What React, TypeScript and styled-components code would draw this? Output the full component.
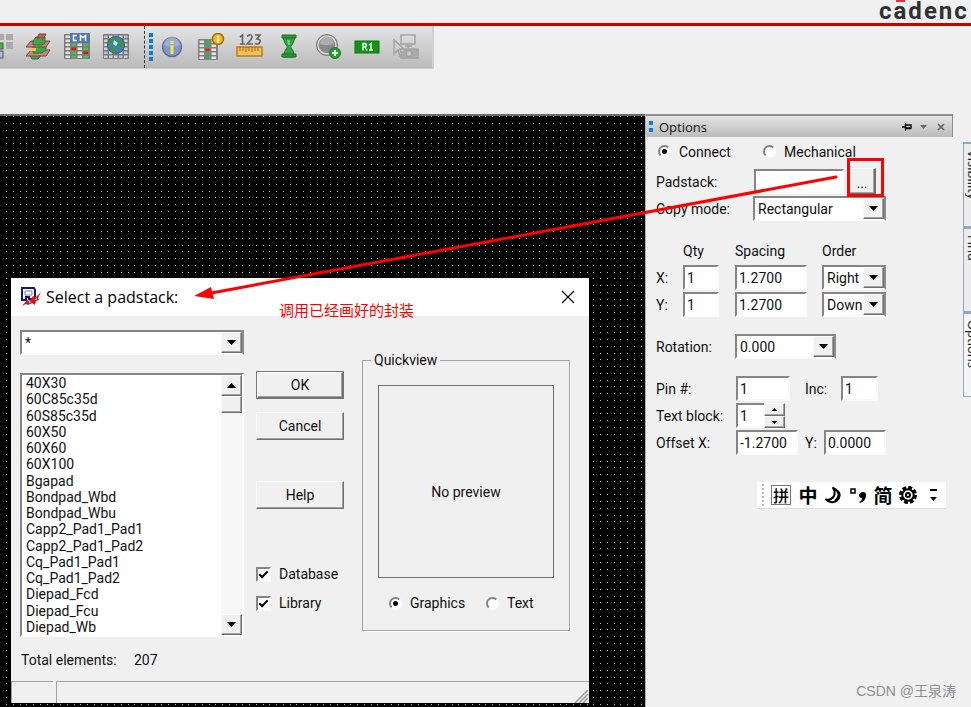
import React from "react";
import styled, { createGlobalStyle, css } from "styled-components";

const GlobalStyle = createGlobalStyle`
  *, *::before, *::after { box-sizing: border-box; }
  body { margin: 0; background: #f0f0f0; }
  button, input, select { font: inherit; color: inherit; }
`;

const humanist = `"Open Sans", "Noto Sans", sans-serif`;
const classic = `Roboto, "Liberation Sans", "Noto Sans CJK SC", sans-serif`;
const cjk = `"Noto Sans CJK SC", "Liberation Sans", sans-serif`;

const raised = css`
  border: 1px solid;
  border-color: #fbfbfb #6e6e6e #6e6e6e #fbfbfb;
  box-shadow: inset -1px -1px 0 #a3a3a3;
  background: #f0f0f0;
`;
const sunken = css`
  border: 2px solid;
  border-color: #858585 #fafafa #fafafa #858585;
  background: #fff;
`;

/* ---------- application frame ---------- */

const Frame = styled.div`
  position: relative;
  display: flex;
  flex-direction: column;
  min-height: 100vh;
  overflow: hidden;
  background: #f0f0f0;
  color: #111;
  font: 14px/16px ${classic};
`;
const Brand = styled.header`
  display: flex;
  justify-content: flex-end;
  height: 26px;
  border-bottom: 3px solid #cc0000;
`;
const Logo = styled.div`
  display: flex;
  gap: 2px;
  width: 92px;
  font: bold 24px/22px Roboto, "Liberation Sans", sans-serif;
  color: #303030;
`;
const Accent = styled.span`
  position: relative;
  &::before {
    content: "";
    position: absolute;
    top: 0;
    left: 2px;
    width: 9px;
    height: 2px;
    background: #e2353b;
  }
`;
const ToolStrip = styled.nav`
  display: flex;
  align-items: center;
  align-self: flex-start;
  height: 43px;
  padding-right: 12px;
  background: linear-gradient(#e4e4e4, #bababa);
  border-right: 2px solid #cfcfcf;
  border-bottom: 1px solid #cfcfcf;
`;
const ToolGroup = styled.div`
  display: flex;
  gap: 11px;
`;
const Tool = styled.button`
  width: 28px;
  height: 28px;
  padding: 0;
  border: 0;
  background: none;
  svg { display: block; }
`;
const PartialTool = styled(Tool)`
  width: 13px;
  overflow: hidden;
`;
const StripDivider = styled.div`
  display: flex;
  align-items: center;
  gap: 4px;
  height: 100%;
  margin: 0 5px 0 14px;
  &::before {
    content: "";
    align-self: stretch;
    border-left: 1px dashed #333;
  }
`;
const Work = styled.main`
  display: flex;
  flex: 1;
  margin-top: 45px;
`;
const rowStops = (c: string) =>
  `#000 0 1px, ${c} 1px 2px, #000 2px 8px, ${c} 8px 9px, #000 9px 15px, ${c} 15px 16px, #000 16px 21px, ${c} 21px 22px, #000 22px 27px`;
const Canvas = styled.section`
  position: relative;
  flex: 1;
  min-height: 593px;
  border-top: 2px solid #6c6c6c;
  background:
    linear-gradient(90deg, ${rowStops("transparent")}) 5px 0 / 27px 27px,
    linear-gradient(${rowStops("#c4c4c4")}) 0 6px / 27px 27px;
`;

/* ---------- form controls ---------- */

const Field = styled.input<{ $w: number; $after?: number }>`
  ${sunken}
  width: ${(p) => p.$w}px;
  height: 25px;
  margin: 0 ${(p) => p.$after ?? 0}px 0 0;
  padding: 0 2px;
  border-radius: 0;
  outline: 0;
`;
const ComboBox = styled.div<{ $w?: number }>`
  display: grid;
  align-items: center;
  width: ${(p) => (p.$w ? `${p.$w}px` : "100%")};
  > * { grid-area: 1 / 1; }
`;
const ComboSelect = styled.select`
  ${sunken}
  appearance: none;
  width: 100%;
  height: 25px;
  padding: 0 22px 0 3px;
  border-right-color: #8c8c8c;
  border-radius: 0;
`;
const Arrow = styled.span`
  ${raised}
  display: grid;
  place-items: center;
  justify-self: end;
  width: 21px;
  height: 21px;
  margin-right: 2px;
  pointer-events: none;
`;
const Triangle = ({ up, small }: { up?: boolean; small?: boolean }) => (
  <svg width={small ? 5 : 9} height={small ? 3 : 5} viewBox="0 0 9 5" preserveAspectRatio="none" aria-hidden>
    <path d={up ? "M0 5h9L4.500 0z" : "M0 0h9L4.500 5z"} fill="#000" />
  </svg>
);
const Combo = ({ label, options, width }: { label: string; options: string[]; width?: number }) => (
  <ComboBox $w={width}>
    <ComboSelect aria-label={label}>
      {options.map((o) => (
        <option key={o}>{o}</option>
      ))}
    </ComboSelect>
    <Arrow>
      <Triangle />
    </Arrow>
  </ComboBox>
);
const Choice = styled.label<{ $w?: number }>`
  display: flex;
  align-items: center;
  gap: 8px;
  width: ${(p) => (p.$w ? `${p.$w}px` : "auto")};
`;
const Radio = styled.input.attrs({ type: "radio" })`
  appearance: none;
  flex: none;
  width: 13px;
  height: 13px;
  margin: 0;
  border: 2px solid;
  border-color: #808080 #fff #fff #808080;
  border-radius: 50%;
  background: #fff;
  &:checked { background: radial-gradient(circle, #000 0 2px, #fff 3px); }
`;
const Check = styled.input.attrs({ type: "checkbox" })`
  ${sunken}
  appearance: none;
  display: grid;
  place-items: center;
  width: 15px;
  height: 15px;
  margin: 0;
  &:checked::before {
    content: "";
    width: 9px;
    height: 5px;
    margin-top: -2px;
    border: solid #000;
    border-width: 0 0 2px 2px;
    transform: rotate(-45deg);
  }
`;
const Push = styled.button<{ $default?: boolean }>`
  ${raised}
  width: 100%;
  height: 28px;
  padding: 0;
  ${(p) => p.$default && "outline: 1px solid #777; outline-offset: -1px; border-width: 2px;"}
`;

/* ---------- options panel ---------- */

const Side = styled.aside`
  position: relative;
  display: flex;
  gap: 10px;
  flex: 0 0 326px;
  border-left: 1px solid #b5b5b5;
`;
const Panel = styled.section`
  flex: 1;
`;
const PanelBar = styled.header`
  display: flex;
  align-items: center;
  gap: 6px;
  height: 23px;
  padding: 0 6px 0 3px;
  border-top: 2px solid #8d8d8d;
  border-right: 1px solid #8d8d8d;
  background: linear-gradient(#e2e2e2, #bcbcbc);
`;
const PanelTitle = styled.h2`
  flex: 1;
  margin: 0;
  font: 13px/18px ${humanist};
`;
const BarButton = styled.button`
  display: grid;
  place-items: center;
  width: 11px;
  height: 14px;
  padding: 0;
  border: 0;
  background: none;
`;
const Form = styled.form`
  display: flex;
  flex-direction: column;
  gap: 15px;
  padding: 1px 0 0 10px;
`;
const Group = styled.div``;
const Line = styled.div`
  display: flex;
  align-items: center;
  height: 27px;
`;
const KindLine = styled(Line)`
  margin-bottom: 3px;
  padding-left: 2px;
`;
const Label = styled.label<{ $w?: number }>`
  width: ${(p) => (p.$w ? `${p.$w}px` : "auto")};
`;
const Matrix = styled.div`
  display: grid;
  grid-template-columns: 27px 52px 87px 64px;
  grid-auto-rows: 27px;
  align-items: center;
`;
const Browse = styled.button`
  ${raised}
  width: 27px;
  height: 27px;
  margin-left: 5px;
  padding: 3px 0 0;
  border-right-width: 2px;
  border-bottom-width: 2px;
`;
const Spin = styled.div`
  display: grid;
  grid-template-rows: 13px 12px;
  width: 21px;
  margin-left: -2px;
`;
const SpinButton = styled.button`
  ${raised}
  display: grid;
  place-items: center;
  padding: 0;
`;
const Tabs = styled.nav`
  width: 8px;
  margin-top: 28px;
  overflow: hidden;
`;
const Tab = styled.button`
  display: block;
  width: 19px;
  height: 85px;
  padding: 6px 0 0;
  border: 1px solid #90a8c0;
  border-top-width: 2px;
  border-right: 0;
  background: #ececec;
  color: #222;
  text-align: left;
  writing-mode: vertical-rl;
  font: 13px/18px ${humanist};
  &[aria-selected="true"] { background: #f4f4f4; }
`;
const Ime = styled.div`
  position: absolute;
  top: 368px;
  right: 25px;
  display: flex;
  align-items: center;
  gap: 5px;
  height: 27px;
  padding: 0 3px 0 5px;
  background: #fff;
  border-bottom: 1px solid #ddd;
  color: #000;
  font: bold 19px/22px ${cjk};
`;
const ImeGrip = styled.span`
  height: 22px;
  margin-right: 2px;
  border-left: 2px dotted #bbb;
`;
const ImeKey = styled.button<{ $boxed?: boolean }>`
  display: grid;
  place-items: center;
  width: 20px;
  height: 22px;
  padding: 0;
  background: none;
  border: 0;
  ${(p) => p.$boxed && "height: 20px; margin-right: 2px; border: 1px solid #777; font-size: 16px; font-weight: 500; line-height: 18px;"}
`;

/* ---------- padstack dialog ---------- */

const Dialog = styled.section`
  position: absolute;
  top: 162px;
  left: 11px;
  width: 578px;
  background: #f0f0f0;
`;
const DialogBar = styled.header`
  display: flex;
  align-items: center;
  gap: 5px;
  height: 38px;
  padding: 0 14px 0 10px;
  background: #fff;
`;
const DialogTitle = styled.h1`
  flex: 1;
  margin: 0;
  font: 16px/22px ${humanist};
  color: #000;
`;
const Close = styled.button`
  width: 14px;
  height: 14px;
  padding: 0;
  border: 0;
  background: none;
  svg { display: block; }
`;
const Body = styled.div`
  display: grid;
  grid-template-columns: 224px 88px 1fr;
  padding: 14px 19px 13px 9px;
`;
const Picker = styled.div``;
const ListBox = styled.div`
  ${sunken}
  display: grid;
  grid-template-columns: 1fr 21px;
  height: 264px;
  margin-top: 18px;
`;
const Items = styled.ul`
  display: grid;
  grid-auto-rows: 1fr;
  margin: 0;
  padding: 0 0 0 4px;
  list-style: none;
`;
const Track = styled.div`
  display: flex;
  flex-direction: column;
  background: #f7f7f7;
`;
const TrackButton = styled.button`
  ${raised}
  display: grid;
  place-items: center;
  height: 21px;
  padding: 0;
  &:last-child { margin-top: auto; }
`;
const Thumb = styled.div`
  ${raised}
  height: 17px;
`;
const Totals = styled.p`
  display: grid;
  grid-template-columns: 113px auto;
  margin: 15px 0 0 1px;
`;
const Actions = styled.div`
  display: flex;
  flex-direction: column;
  gap: 13px;
  margin: 41px 0 0 12px;
  width: 88px;
`;
const HelpSlot = styled.div`
  margin: 28px 0 44px;
`;
const Quickview = styled.fieldset`
  align-self: start;
  height: 279px;
  margin: 22px 0 0 30px;
  padding: 17px 15px 0;
  border: 1px solid #a3a3a3;
  box-shadow: 1px 1px 0 #fff;
  legend {
    margin-left: -7px;
    padding: 0 3px;
  }
`;
const Preview = styled.div`
  display: grid;
  place-items: center;
  height: 193px;
  padding-top: 20px;
  border: 1px solid #707070;
`;
const Modes = styled.div`
  display: grid;
  grid-template-columns: 97px auto;
  margin: 17px 0 0 11px;
`;
const Status = styled.footer`
  display: grid;
  grid-template-columns: 42px 1fr;
  gap: 3px;
  height: 22px;
`;
const StatusCell = styled.div`
  display: flex;
  justify-content: flex-end;
  align-items: flex-end;
  border-top: 1px solid #a3a3a3;
  border-left: 1px solid #a3a3a3;
`;

/* ---------- overlays ---------- */

const Annotation = styled.svg`
  position: absolute;
  top: 0;
  right: 0;
  pointer-events: none;
`;
const Note = styled.p`
  position: absolute;
  top: 184px;
  left: 279px;
  margin: 0;
  color: #f00;
  font: 15px/20px ${cjk};
`;
const Watermark = styled.p`
  position: absolute;
  right: 15px;
  bottom: 6px;
  margin: 0;
  color: #8f8f8f;
  font: 14px/20px "Liberation Sans", "Noto Sans CJK SC", sans-serif;
`;

/* ---------- drawings ---------- */

const cells = (rows: number, cols: number, colour: (r: number, c: number) => string, x0 = 3, y0 = 3, w = 6, h = 4) =>
  Array.from({ length: rows * cols }, (_, i) => {
    const r = Math.floor(i / cols);
    const c = i % cols;
    return <rect key={i} x={x0 + c * w} y={y0 + r * h} width={w - 1.5} height={h - 1.5} fill={colour(r, c)} />;
  });

const Icon = ({ children, ...p }: React.SVGProps<SVGSVGElement>) => (
  <svg width="28" height="28" viewBox="0 0 28 28" aria-hidden {...p}>
    {children}
  </svg>
);

const LayersIcon = () => (
  <Icon>
    <g strokeWidth="1">
      <path d="M5 21h13l-4 5H8z" fill="#46a64a" stroke="#2b6e2e" />
      <path d="M7 17h19l-4 6H2z" fill="#c98681" stroke="#843f3c" />
      <path d="M9 13h13v4l-4 3H9z" fill="#43a447" stroke="#2b6e2e" />
      <path d="M6 15h6v3H6z" fill="#efc14c" />
      <path d="M7 8h19l-4 6H2z" fill="#c98681" stroke="#843f3c" />
      <path d="M12 4h9v6l-3 2h-9V8z" fill="#43a447" stroke="#2b6e2e" />
      <path d="M15 1h7l-2 4h-7z" fill="#b5625d" stroke="#843f3c" />
    </g>
  </Icon>
);
const CmIcon = () => (
  <Icon>
    <rect x="1" y="1" width="26" height="25" rx="1" fill="#7b7b7b" />
    {cells(6, 4, (r, c) => (r === 3 && c === 1 ? "#e11" : r === 4 && c === 3 ? "#e11" : c % 2 ? "#4cbf4c" : "#e0e0e0"), 2.5, 2.5, 6, 4)}
    <rect x="7" y="0" width="20" height="10" fill="#5578ae" />
    <path d="M14 2.500h-3.500v5H14M17.500 8V2.500l2.500 2 2.500-2V8" fill="none" stroke="#fff" strokeWidth="1.500" />
  </Icon>
);
const GlobeIcon = () => (
  <Icon>
    <rect x="1" y="1" width="26" height="25" rx="1" fill="#7b7b7b" />
    {cells(6, 5, (r, c) => ((r + c) % 4 ? "#d2d2d2" : "#b7bfdf"), 2, 2.5, 5, 4)}
    <circle cx="14" cy="12" r="8.500" fill="#467fb0" stroke="#315d86" />
    <path d="M7 8c2-3 5-4 7-3l-1 3-3 1-1 3-3-1zM16 6l4 2 2 5-3 3-2-3-3-2zM9 14l4 1 1 4-2 1-3-3z" fill="#399443" />
    <path d="M12 7l4 3-2 3-3-2z" fill="#c3e3ee" />
  </Icon>
);
const InfoIcon = () => (
  <Icon>
    <circle cx="14" cy="14" r="9.500" fill="#8298cc" stroke="#5a6c9b" strokeWidth="1.500" />
    <path d="M6 12a8 8 0 0 1 16 0q-8 4-16 0z" fill="#a7b7de" opacity=".7" />
    <path d="M12.500 8h3v3h-3zM12.500 12.500h3V21h-3z" fill="#f3ec35" />
  </Icon>
);
const SheetInfoIcon = () => (
  <Icon>
    <rect x="1" y="6" width="20" height="21" rx="1" fill="#808080" />
    {cells(5, 3, (r, c) => (c === 1 ? (r === 2 ? "#dc2222" : "#3fae43") : "#e4e4e4"), 2.5, 7.5, 6, 4)}
    <circle cx="21" cy="6" r="5.500" fill="#f6bd18" stroke="#a46c10" strokeWidth="1.500" />
    <path d="M20 2.500h2v2h-2zM20 5.500h2V10h-2z" fill="#fff9d8" />
  </Icon>
);
const RulerIcon = () => (
  <Icon>
    <g fill="none" stroke="#666" strokeWidth="1.700">
      <path d="M4 4l2.500-2v9M4 11h5M11 3.500Q14.500 0 16 3.500 16.500 5.500 11 11h6M19 2h5l-3 4q4 0 3 3-1 3-5 1.500" />
    </g>
    <rect x="1" y="14" width="25" height="9" fill="#f6c15a" stroke="#c27b1a" strokeWidth="1.500" />
    <path d="M4 14v4M7 14v4M10 14v5M13 14v4M16 14v5M19 14v4M22 14v4" stroke="#a4601a" />
  </Icon>
);
const HourglassIcon = () => (
  <Icon>
    <path d="M8 4h12q-1 6-4.500 10 3.500 4 4.500 10H8q1-6 4.500-10-3.500-4-4.500-10z" fill="#2da53c" stroke="#1b7027" />
    <path d="M7 2h14v3H7zM7 21h14v3H7z" fill="#2d9639" stroke="#1b7027" />
    <path d="M12 7h3v5h-2z" fill="#73cc77" />
  </Icon>
);
const DiscAddIcon = () => (
  <Icon>
    <circle cx="13" cy="12" r="10.500" fill="#8b8b8b" stroke="#747474" />
    <circle cx="13" cy="12" r="9" fill="none" stroke="#d8d8d8" strokeWidth="1.500" />
    <path d="M6 11a7 7 0 0 1 14-1q-6 4-14 1z" fill="#adadad" />
    <circle cx="21" cy="20" r="5.500" fill="#25a12f" stroke="#167720" />
    <path d="M21 17v6M18 20h6" stroke="#fff" strokeWidth="2" />
  </Icon>
);
const ResistorIcon = () => (
  <Icon>
    <rect x="2" y="8" width="24" height="12" fill="#149414" stroke="#0c720c" />
    <path d="M10 17.500v-7h2.500q1.500 1.700 0 3.500H10M12 14l2 3.500M16 12l2-1.500v7M16 17h4" fill="none" stroke="#efffed" strokeWidth="1.500" />
  </Icon>
);
const CameraIcon = () => (
  <Icon>
    <g fill="none" stroke="#a2a2a2" strokeWidth="1.500">
      <path d="M9 2h14v9H9zM16 11v4M13 13h7" />
      <path d="M2 7v14l4-4 2 6 2-1-2-6h4z" />
      <path d="M12 16h14v9H9v-4" fill="#aaa" />
      <circle cx="17" cy="20.500" r="3" fill="#c9c9c9" />
    </g>
  </Icon>
);
const PartialIcon = () => (
  <svg width="13" height="28" viewBox="0 0 13 28" aria-hidden>
    <path d="M0 1h4v6H0zM6 1h7v6H6zM6 9h7v7H6z" fill="#ababab" />
    <rect x="-5" y="10" width="8" height="6" fill="#44b544" stroke="#555" />
    <rect x="-5" y="18" width="8" height="7" fill="#aab8e8" stroke="#555" />
  </svg>
);
const Dots = ({ rows, pitch }: { rows: number; pitch: number }) => (
  <svg width="4" height={rows * pitch} aria-hidden>
    {Array.from({ length: rows }, (_, i) => (
      <rect key={i} y={i * pitch + 1} width="4" height="4" fill="#0a7bdc" />
    ))}
  </svg>
);
const DialogIcon = () => (
  <svg width="20" height="20" viewBox="0 0 20 20" aria-hidden>
    <path d="M1 1h12l1 2v9H8v-2H5v3H1z" fill="#fff" stroke="#15157f" strokeWidth="2" />
    <path d="M4 4h7v4H4z" fill="#fff" stroke="#7a7aad" />
    <path d="M1 19l5-6 3 1 3-5 3 1 5-5-3 6 1 2-3 1-1 4-3-2-4 2-2-1z" fill="#e11212" />
    <path d="M7 16l2-3 1 3zM13 13l3-3v3z" fill="#fff" stroke="#8d1010" strokeWidth=".5" />
  </svg>
);
const MoonIcon = () => (
  <svg width="19" height="18" viewBox="0 0 19 18" aria-hidden>
    <path d="M9 2C12 6 11 11 7 13 5 14 3 14 2 13.500 4 16 9 17.500 13 14.500 16 12 17 7 13 4.500 12 3.500 10 2.500 9 2z" fill="#fff" stroke="#000" strokeWidth="2" strokeLinejoin="round" />
    <path d="M13 5Q17 10 11 15" fill="none" stroke="#000" strokeWidth="2" />
  </svg>
);
const PunctIcon = () => (
  <svg width="18" height="18" viewBox="0 0 18 18" aria-hidden>
    <rect x="2" y="3" width="4" height="4" fill="none" stroke="#000" strokeWidth="1.500" />
    <path d="M14 6a3 3 0 0 1 3 3q0 6-6 8l-1-1q3-1 3-4-3 0-3-3 1-3 4-3z" fill="#000" />
  </svg>
);
const GearIcon = () => (
  <svg width="20" height="20" viewBox="0 0 20 20" aria-hidden>
    <circle cx="10" cy="10" r="7.500" fill="none" stroke="#000" strokeWidth="3" strokeDasharray="3.900 1.990" />
    <circle cx="10" cy="10" r="5.700" fill="#fff" stroke="#000" strokeWidth="2" />
    <circle cx="10" cy="10" r="2" fill="#fff" stroke="#000" strokeWidth="2" />
  </svg>
);
const MoreIcon = () => (
  <svg width="9" height="16" viewBox="0 0 9 16" aria-hidden>
    <path d="M1 2h7v2H1zM1 10h7l-3.500 4z" fill="#000" />
  </svg>
);

const tools: [string, React.FC][] = [
  ["Layers", LayersIcon],
  ["Constraint manager", CmIcon],
  ["Global settings", GlobeIcon],
];
const displayTools: [string, React.FC][] = [
  ["Show element", InfoIcon],
  ["Sheet info", SheetInfoIcon],
  ["Measure", RulerIcon],
  ["Timing", HourglassIcon],
  ["Add pad", DiscAddIcon],
  ["Reference", ResistorIcon],
  ["Snapshot", CameraIcon],
];
const padstacks = [
  "40X30", "60C85c35d", "60S85c35d", "60X50", "60X60", "60X100", "Bgapad", "Bondpad_Wbd",
  "Bondpad_Wbu", "Capp2_Pad1_Pad1", "Capp2_Pad1_Pad2", "Cq_Pad1_Pad1", "Cq_Pad1_Pad2",
  "Diepad_Fcd", "Diepad_Fcu", "Diepad_Wb",
];

const PadstackDialog = () => (
  <Dialog role="dialog" aria-labelledby="dialog-title">
    <DialogBar>
      <DialogIcon />
      <DialogTitle id="dialog-title">Select a padstack:</DialogTitle>
      <Close aria-label="Close">
        <svg width="14" height="14" viewBox="0 0 14 14"><path d="M1 1l12 12M13 1L1 13" stroke="#000" strokeWidth="1.200" /></svg>
      </Close>
    </DialogBar>
    <Body>
      <Picker>
        <Combo label="Filter" options={["*"]} />
        <ListBox>
          <Items role="listbox" aria-label="Padstacks">
            {padstacks.map((p) => (
              <li key={p} role="option" aria-selected={false}>{p}</li>
            ))}
          </Items>
          <Track>
            <TrackButton aria-label="Scroll up"><Triangle up /></TrackButton>
            <Thumb />
            <TrackButton aria-label="Scroll down"><Triangle /></TrackButton>
          </Track>
        </ListBox>
        <Totals><span>Total elements:</span><span>207</span></Totals>
      </Picker>
      <Actions>
        <Push $default>OK</Push>
        <Push>Cancel</Push>
        <HelpSlot><Push>Help</Push></HelpSlot>
        <Choice><Check defaultChecked />Database</Choice>
        <Choice><Check defaultChecked />Library</Choice>
      </Actions>
      <Quickview>
        <legend>Quickview</legend>
        <Preview>No preview</Preview>
        <Modes>
          <Choice><Radio name="view" defaultChecked />Graphics</Choice>
          <Choice><Radio name="view" />Text</Choice>
        </Modes>
      </Quickview>
    </Body>
    <Status>
      <StatusCell />
      <StatusCell>
        <svg width="15" height="14" viewBox="0 0 15 14" aria-hidden>
          <path d="M1 14L14 1M5 14l9-9M9 14l5-5" stroke="#999" strokeWidth="1.500" />
        </svg>
      </StatusCell>
    </Status>
  </Dialog>
);

const OptionsForm = () => (
  <Form>
    <Group>
      <KindLine>
        <Choice $w={105}><Radio name="kind" defaultChecked />Connect</Choice>
        <Choice><Radio name="kind" />Mechanical</Choice>
      </KindLine>
      <Line>
        <Label $w={98} htmlFor="padstack">Padstack:</Label>
        <Field id="padstack" $w={90} />
        <Browse type="button" aria-label="Browse padstacks">...</Browse>
      </Line>
      <Line>
        <Label $w={97}>Copy mode:</Label>
        <Combo label="Copy mode" options={["Rectangular"]} width={133} />
      </Line>
    </Group>
    <Matrix>
      <span />
      <span>Qty</span>
      <span>Spacing</span>
      <span>Order</span>
      <Label htmlFor="qx">X:</Label>
      <Field id="qx" $w={36} defaultValue="1" />
      <Field aria-label="X spacing" $w={72} defaultValue="1.2700" />
      <Combo label="X order" options={["Right"]} width={64} />
      <Label htmlFor="qy">Y:</Label>
      <Field id="qy" $w={36} defaultValue="1" />
      <Field aria-label="Y spacing" $w={72} defaultValue="1.2700" />
      <Combo label="Y order" options={["Down"]} width={64} />
    </Matrix>
    <Line>
      <Label $w={79}>Rotation:</Label>
      <Combo label="Rotation" options={["0.000"]} width={101} />
    </Line>
    <Group>
      <Line>
        <Label $w={80} htmlFor="pin">Pin #:</Label>
        <Field id="pin" $w={54} $after={15} defaultValue="1" />
        <Label $w={36} htmlFor="inc">Inc:</Label>
        <Field id="inc" $w={37} defaultValue="1" />
      </Line>
      <Line>
        <Label $w={80} htmlFor="block">Text block:</Label>
        <Field id="block" $w={30} defaultValue="1" />
        <Spin>
          <SpinButton type="button" aria-label="Increase"><Triangle up small /></SpinButton>
          <SpinButton type="button" aria-label="Decrease"><Triangle small /></SpinButton>
        </Spin>
      </Line>
      <Line>
        <Label $w={80} htmlFor="ox">Offset X:</Label>
        <Field id="ox" $w={62} $after={7} defaultValue="-1.2700" />
        <Label $w={19} htmlFor="oy">Y:</Label>
        <Field id="oy" $w={62} defaultValue="0.0000" />
      </Line>
    </Group>
  </Form>
);

export default function App() {
  return (
    <Frame>
      <GlobalStyle />
      <Brand>
        <Logo>
          <span>c</span><Accent>a</Accent><span>d</span><span>e</span><span>n</span><span>c</span>
        </Logo>
      </Brand>
      <ToolStrip aria-label="Tools">
        <ToolGroup>
          <PartialTool aria-label="Grid"><PartialIcon /></PartialTool>
          {tools.map(([name, Glyph]) => (
            <Tool key={name} aria-label={name}><Glyph /></Tool>
          ))}
        </ToolGroup>
        <StripDivider><Dots rows={5} pitch={6} /></StripDivider>
        <ToolGroup>
          {displayTools.map(([name, Glyph]) => (
            <Tool key={name} aria-label={name}><Glyph /></Tool>
          ))}
        </ToolGroup>
      </ToolStrip>
      <Work>
        <Canvas>
          <PadstackDialog />
          <Note>调用已经画好的封装</Note>
        </Canvas>
        <Side>
          <Panel>
            <PanelBar>
              <Dots rows={2} pitch={7} />
              <PanelTitle>Options</PanelTitle>
              <BarButton aria-label="Pin">
                <svg width="10" height="9" viewBox="0 0 10 9"><path d="M0 5h3M3.500 1v8M4 3h5v3H4M4 6.500h5" fill="none" stroke="#000" strokeWidth="1.300" /></svg>
              </BarButton>
              <BarButton aria-label="Menu">
                <svg width="7" height="4" viewBox="0 0 7 4"><path d="M0 0h7L3.500 4z" fill="#666" /></svg>
              </BarButton>
              <BarButton aria-label="Close panel">
                <svg width="8" height="8" viewBox="0 0 8 8"><path d="M1 1l6 6M7 1L1 7" stroke="#666" strokeWidth="1.700" /></svg>
              </BarButton>
            </PanelBar>
            <OptionsForm />
          </Panel>
          <Tabs role="tablist">
            <Tab role="tab">Visibility</Tab>
            <Tab role="tab">Find</Tab>
            <Tab role="tab" aria-selected="true">Options</Tab>
          </Tabs>
          <Ime>
            <ImeGrip />
            <ImeKey $boxed>拼</ImeKey>
            <ImeKey>中</ImeKey>
            <ImeKey aria-label="Half width"><MoonIcon /></ImeKey>
            <ImeKey aria-label="Punctuation"><PunctIcon /></ImeKey>
            <ImeKey>简</ImeKey>
            <ImeKey aria-label="Settings"><GearIcon /></ImeKey>
            <ImeKey aria-label="More"><MoreIcon /></ImeKey>
          </Ime>
        </Side>
      </Work>
      <Annotation width="971" height="707" viewBox="0 0 971 707" aria-hidden>
        <rect x="848.500" y="159.500" width="34" height="36" fill="none" stroke="#f00" strokeWidth="3" />
        <path d="M836 177L206 294" stroke="#f00" strokeWidth="3" strokeLinecap="round" />
        <path d="M194 296l17-9 3 12z" fill="#f00" />
      </Annotation>
      <Watermark>CSDN @王泉涛</Watermark>
    </Frame>
  );
}
